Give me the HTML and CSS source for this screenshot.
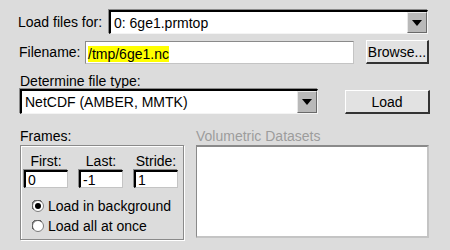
FILE: index.html
```html
<!DOCTYPE html>
<html lang="en">
<head>
    <meta charset="UTF-8">
    <title>Open Trajectory</title>
    <link rel="stylesheet" href="styles.css">
</head>
<body>
    <div class="dialog">
        <div class="row row-files">
            <span class="label label-files">Load files for:</span>
            <div class="menu menu-files">
                <span class="menu-text">0: 6ge1.prmtop</span>
                <span class="menu-arrow"><svg width="10" height="6" viewBox="0 0 10 6"><polygon points="0,0 10,0 5,6" fill="#000"/></svg></span>
            </div>
        </div>

        <div class="row row-name">
            <span class="label label-name">Filename:</span>
            <div class="entry entry-name"><span class="selected">/tmp/6ge1.nc</span></div>
            <div class="button button-browse">Browse...</div>
        </div>

        <div class="type-label">Determine file type:</div>
        <div class="row row-type">
            <div class="menu menu-type">
                <span class="menu-text">NetCDF (AMBER, MMTK)</span>
                <span class="menu-arrow"><svg width="10" height="6" viewBox="0 0 10 6"><polygon points="0,0 10,0 5,6" fill="#000"/></svg></span>
            </div>
            <div class="button button-load">Load</div>
        </div>

        <div class="bottom">
            <div class="frames-col">
                <div class="group-label">Frames:</div>
                <div class="frames-box">
                    <div class="frame-fields">
                        <div class="field">
                            <span class="field-label">First:</span>
                            <div class="entry entry-small">0</div>
                        </div>
                        <div class="field">
                            <span class="field-label">Last:</span>
                            <div class="entry entry-small">-1</div>
                        </div>
                        <div class="field">
                            <span class="field-label">Stride:</span>
                            <div class="entry entry-small">1</div>
                        </div>
                    </div>
                    <div class="radio">
                        <svg class="radio-dot" width="12" height="12" viewBox="0 0 12 12">
                            <circle cx="6" cy="6" r="5.5" fill="#fff" stroke="#7a7a7a"/>
                            <path d="M1.5 9.5 A5.5 5.5 0 0 1 9.5 1.5" fill="none" stroke="#333" stroke-width="1"/>
                            <circle cx="6" cy="6" r="3" fill="#000"/>
                        </svg>
                        <span>Load in background</span>
                    </div>
                    <div class="radio">
                        <svg class="radio-dot" width="12" height="12" viewBox="0 0 12 12">
                            <circle cx="6" cy="6" r="5.5" fill="#fff" stroke="#7a7a7a"/>
                            <path d="M1.5 9.5 A5.5 5.5 0 0 1 9.5 1.5" fill="none" stroke="#333" stroke-width="1"/>
                        </svg>
                        <span>Load all at once</span>
                    </div>
                </div>
            </div>
            <div class="vol-col">
                <div class="group-label dim">Volumetric Datasets</div>
                <div class="listbox"></div>
            </div>
        </div>
    </div>
</body>
</html>
```

FILE: styles.css
```css
html, body {
    margin: 0;
    padding: 0;
    background: #dcdcdc;
    font-family: 'Liberation Sans', Arial, sans-serif;
    font-size: 14px;
    line-height: 16px;
    color: #000;
}

.dialog {
    width: 450px;
    height: 250px;
    padding-top: 10px;
    box-sizing: border-box;
    overflow: hidden;
}

.row {
    display: flex;
    align-items: center;
}

.row-files {
    height: 24px;
    padding-left: 18px;
}

.label-files {
    width: 91px;
}

.menu {
    display: flex;
    align-items: stretch;
    height: 24px;
    box-sizing: border-box;
    background: #fff;
    border-top: 2px solid #000;
    border-left: 2px solid #000;
    border-right: 1px solid #f4f4f4;
    border-bottom: 1px solid #f4f4f4;
    box-shadow: -1px -1px 0 #8a8a8a;
}

.menu-files {
    width: 319px;
}

.menu-text {
    flex: 1;
    padding-left: 3px;
    display: flex;
    align-items: center;
}

.menu-arrow {
    width: 20px;
    display: flex;
    align-items: center;
    justify-content: center;
    background: #b9b9b9;
    box-sizing: border-box;
    border-top: 1px solid #e8e8e8;
    border-left: 1px solid #e8e8e8;
    border-right: 1px solid #6a6a6a;
    border-bottom: 1px solid #6a6a6a;
}

.row-name {
    margin-top: 6px;
    height: 24px;
    padding-left: 19px;
}

.label-name {
    width: 66px;
}

.entry {
    box-sizing: border-box;
    background: #fff;
    border-top: 1px solid #8a8a8a;
    border-left: 1px solid #8a8a8a;
    border-right: 1px solid #c4c4c4;
    border-bottom: 1px solid #c4c4c4;
}

.entry-name {
    width: 269px;
    height: 23px;
    padding: 4px 0 0 2px;
}

.selected {
    background: #ffff00;
    display: inline-block;
    line-height: 16px;
}

.button {
    box-sizing: border-box;
    display: flex;
    align-items: center;
    justify-content: center;
    background: #e2e2e2;
    border-top: 1px solid #fff;
    border-left: 1px solid #fff;
    border-right: 2px solid #333;
    border-bottom: 2px solid #333;
}

.button-browse {
    width: 63px;
    height: 24px;
    margin-left: 12px;
}

.type-label {
    margin-top: 9px;
    padding-left: 20px;
    height: 16px;
}

.row-type {
    height: 25px;
    padding-left: 20px;
    align-items: flex-start;
}

.menu-type {
    width: 298px;
    height: 25px;
}

.button-load {
    width: 85px;
    height: 24px;
    margin-top: 1px;
    margin-left: 27px;
}

.bottom {
    display: flex;
    margin-top: 14px;
    padding-left: 20px;
    gap: 12px;
}

.group-label {
    height: 16px;
    margin-bottom: 1px;
}

.group-label.dim {
    color: #9c9c9c;
}

.frames-col {
    width: 164px;
}

.frames-box {
    box-sizing: border-box;
    height: 95px;
    border: 1px solid #8a8a8a;
    box-shadow: inset 1px 1px 0 #fff, 1px 1px 0 #fff;
    padding: 7px 0 0 3px;
}

.frame-fields {
    display: flex;
    gap: 11px;
}

.field {
    display: flex;
    flex-direction: column;
    align-items: center;
    width: 44px;
}

.field-label {
    height: 16px;
    margin-bottom: 1px;
}

.entry-small {
    width: 44px;
    height: 18px;
    align-self: stretch;
    padding-left: 2px;
    line-height: 16px;
    border-top: 2px solid #000;
    border-left: 2px solid #000;
    box-shadow: -1px -1px 0 #8a8a8a;
}

.frame-fields {
    margin-bottom: 8px;
}

.radio {
    display: flex;
    align-items: center;
    height: 20px;
    padding-left: 8px;
    gap: 4px;
}

.vol-col {
    width: 233px;
}

.listbox {
    box-sizing: border-box;
    height: 93px;
    background: #fff;
    border-top: 2px solid #8a8a8a;
    border-left: 1px solid #8a8a8a;
    border-right: 2px solid #c4c4c4;
    border-bottom: 2px solid #c4c4c4;
}
```
